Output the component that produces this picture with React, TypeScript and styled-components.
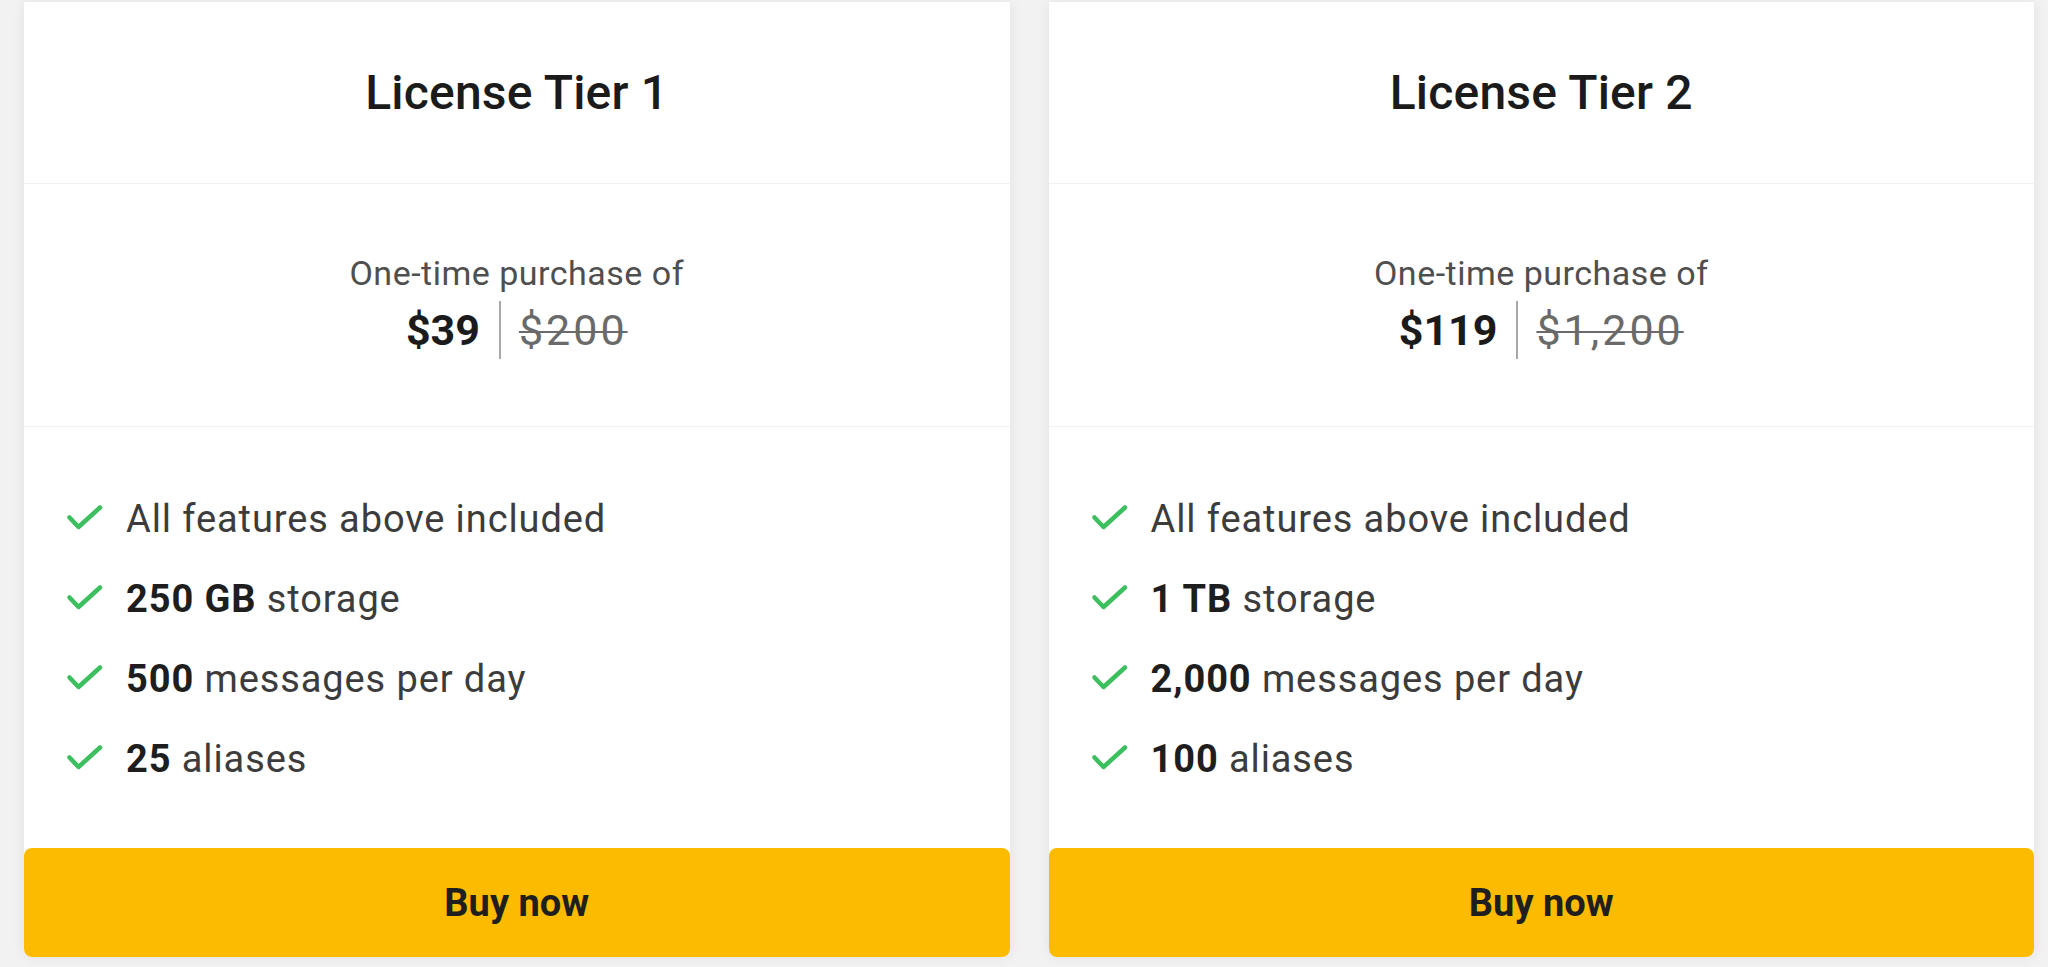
import React from "react";
import styled, { createGlobalStyle } from "styled-components";

const GlobalStyle = createGlobalStyle`
  html, body {
    margin: 0;
    padding: 0;
    background: #f2f2f2;
    font-family: Roboto, "Liberation Sans", Arial, sans-serif;
  }
  * { box-sizing: border-box; }
`;

const Page = styled.div`
  display: grid;
  grid-template-columns: 1fr 1fr;
  column-gap: 39px;
  padding: 2px 14px 10px 24px;
  height: 967px;
`;

const Card = styled.div`
  display: flex;
  flex-direction: column;
  background: #ffffff;
  box-shadow: 0 0 14px rgba(0, 0, 0, 0.07);
  border-radius: 0 0 8px 8px;
`;

const Header = styled.div`
  height: 182px;
  display: flex;
  align-items: center;
  justify-content: center;
  border-bottom: 1px solid #f1f1f1;
`;

const Title = styled.h2`
  margin: 0;
  font-size: 48px;
  font-weight: 500;
  color: #1b1b1b;
  letter-spacing: 0.2px;
`;

const PriceSection = styled.div`
  height: 243px;
  display: flex;
  flex-direction: column;
  align-items: center;
  justify-content: center;
  border-bottom: 1px solid #f1f1f1;
  padding-top: 2px;
`;

const PurchaseLabel = styled.div`
  font-size: 34px;
  font-weight: 400;
  color: #4f4f4f;
  line-height: 40px;
  letter-spacing: 0.5px;
`;

const PriceRow = styled.div`
  display: flex;
  align-items: center;
  margin-top: 8px;
`;

const Price = styled.span`
  font-size: 43px;
  font-weight: 700;
  color: #1b1b1b;
  line-height: 58px;
`;

const Separator = styled.span`
  width: 2px;
  height: 58px;
  background: #a8a8a8;
  margin: 0 18px 0 19px;
`;

const OldPrice = styled.span`
  font-size: 43px;
  font-weight: 400;
  color: #6a6a6a;
  line-height: 58px;
  text-decoration: line-through;
  text-decoration-thickness: 2px;
  letter-spacing: 3px;
`;

const Features = styled.ul`
  flex: 1;
  list-style: none;
  margin: 0;
  padding: 52px 0 0 42px;
`;

const Feature = styled.li`
  display: flex;
  align-items: center;
  height: 80px;
  font-size: 38px;
  letter-spacing: 0.9px;
  color: #3c3c3c;
  line-height: 80px;
  gap: 22px;

  b {
    font-weight: 700;
    color: #1e1e1e;
  }
`;

const CheckIcon = styled.svg`
  width: 38px;
  height: 27px;
  flex: none;
  margin-top: -4px;
`;

const BuyButton = styled.button`
  height: 109px;
  width: 100%;
  border: none;
  border-radius: 8px;
  background: #fdbb00;
  color: #1f1f1f;
  font-family: Roboto, "Liberation Sans", Arial, sans-serif;
  font-size: 38px;
  font-weight: 700;
  cursor: pointer;
`;

const Check = () => (
  <CheckIcon viewBox="0 0 38 27" fill="none">
    <path
      d="M3.5 13.5 L12.5 23 L34 3.5"
      stroke="#3dbf5f"
      strokeWidth="4.5"
      strokeLinecap="round"
      strokeLinejoin="round"
    />
  </CheckIcon>
);

type Tier = {
  name: string;
  price: string;
  old: string;
  storage: string;
  messages: string;
  aliases: string;
};

const tiers: Tier[] = [
  { name: "License Tier 1", price: "$39", old: "$200", storage: "250 GB", messages: "500", aliases: "25" },
  { name: "License Tier 2", price: "$119", old: "$1,200", storage: "1 TB", messages: "2,000", aliases: "100" },
];

const TierCard = ({ tier }: { tier: Tier }) => (
  <Card>
    <Header>
      <Title>{tier.name}</Title>
    </Header>
    <PriceSection>
      <PurchaseLabel>One-time purchase of</PurchaseLabel>
      <PriceRow>
        <Price>{tier.price}</Price>
        <Separator />
        <OldPrice>{tier.old}</OldPrice>
      </PriceRow>
    </PriceSection>
    <Features>
      <Feature>
        <Check />
        <span>All features above included</span>
      </Feature>
      <Feature>
        <Check />
        <span>
          <b>{tier.storage}</b> storage
        </span>
      </Feature>
      <Feature>
        <Check />
        <span>
          <b>{tier.messages}</b> messages per day
        </span>
      </Feature>
      <Feature>
        <Check />
        <span>
          <b>{tier.aliases}</b> aliases
        </span>
      </Feature>
    </Features>
    <BuyButton>Buy now</BuyButton>
  </Card>
);

export default function App() {
  return (
    <>
      <GlobalStyle />
      <Page>
        {tiers.map((t) => (
          <TierCard key={t.name} tier={t} />
        ))}
      </Page>
    </>
  );
}
